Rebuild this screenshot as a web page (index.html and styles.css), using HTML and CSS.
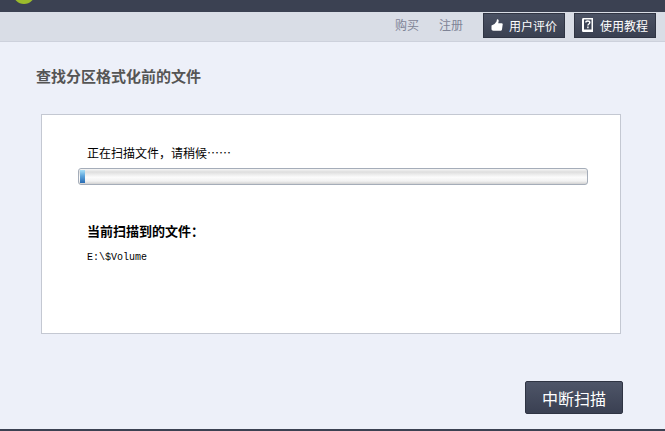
FILE: index.html
```html
<!DOCTYPE html>
<html lang="zh-CN">
<head>
  <meta charset="UTF-8" />
  <meta name="viewport" content="width=device-width, initial-scale=1.0" />
  <title>查找分区格式化前的文件</title>
  <link rel="stylesheet" href="styles.css">
</head>
<body>
  <div class="app">
    <div class="topbar">
      <div class="logo"></div>
    </div>

    <!-- Links row -->
    <div class="navbar">
      <a class="nav-link buy">购买</a>
      <a class="nav-link signup">注册</a>
      <a class="nav-btn">
        <svg class="nav-icon" viewBox="0 0 12 12" xmlns="http://www.w3.org/2000/svg">
          <path d="M0.5 6.5 L3.5 5 L5.5 2.5 L6 0.3 C7.4 0 8 1.2 7.6 2.6 L7.2 4.2 H10.6 C11.7 4.2 12 5.2 11.6 6 L11 10.4 C10.8 11.3 10.2 11.7 9.4 11.7 H2.5 C1.2 11.7 0.5 11 0.5 10 Z" fill="#fff"/>
        </svg>
        用户评价
      </a>
      <a class="nav-btn">
        <svg class="nav-icon book" viewBox="0 0 11 14" xmlns="http://www.w3.org/2000/svg">
          <path d="M1.5 0 H11 V14 H1.5 C0.5 14 0 13.5 0 12.5 V1.5 C0 0.5 0.5 0 1.5 0 Z" fill="#fff"/>
          <path d="M2 1.5 H9.5 V11.5 H2 Z" fill="#3d4456"/>
          <path d="M3.8 4.6 C3.8 2.4 7.8 2.4 7.8 4.6 C7.8 6 5.9 6 5.9 7.6" fill="none" stroke="#fff" stroke-width="1.4"/>
          <path d="M5.2 8.6 H6.6 V10.2 H5.2 Z" fill="#fff"/>
        </svg>
        使用教程
      </a>
    </div>

    <div class="content">
      <h1 class="page-title">查找分区格式化前的文件</h1>

      <div class="card">
        <div class="scan-label">正在扫描文件，请稍候……</div>
        <div class="progress">
          <div class="progress-fill" style="width:1%"></div>
        </div>
        <div class="current-label">当前扫描到的文件：</div>
        <div class="current-file">E:\$Volume</div>
      </div>

      <div class="actions">
        <button type="button" class="stop-btn">中断扫描</button>
      </div>
    </div>
  </div>
</body>
</html>
```

FILE: styles.css
```css
:root {
  --dark: #3b4152;
  --bar: #d9dde6;
  --bg: #edf0f9;
  --cjk: "Noto Sans CJK SC", "Liberation Sans", sans-serif;
}
*, *::before, *::after { box-sizing: border-box; }
html, body { margin: 0; padding: 0; height: 100%; overflow: hidden; }
body { font-family: var(--cjk); font-size: 12px; background: var(--bg); }

.app { height: 431px; display: flex; flex-direction: column; position: relative; border-bottom: 2px solid var(--dark); }

.topbar { height: 12px; background: var(--dark); flex: none; }
.logo {
  position: absolute; left: 13px; top: -7px;
  width: 22px; height: 11px;
  border-radius: 0 0 11px 11px;
  background: #9cbb2c;
}

.navbar {
  height: 30px; flex: none;
  background: var(--bar);
  border-bottom: 1px solid #cdd1dc;
  display: flex; align-items: center;
  padding: 0 9px 3px 0;
  justify-content: flex-end;
}
.nav-link { color: #7f8496; font-size: 12px; line-height: 1; }
.buy { margin-right: 20px; }
.signup { margin-right: 20px; }
.nav-btn {
  width: 82px; height: 25px;
  display: flex; align-items: center; justify-content: center; gap: 6px;
  background: linear-gradient(#4a5163, #3a4051);
  border: 1px solid #2f3443;
  color: #fff; font-size: 12px;
}
.nav-btn + .nav-btn { margin-left: 9px; gap: 7px; }
.nav-icon { width: 12px; height: 12px; flex: none; }
.nav-icon.book { width: 11px; height: 14px; }

.content { flex: 1; display: flex; flex-direction: column; padding: 24px 42px 0 36px; }
.page-title { margin: 0; font-size: 15px; line-height: 20px; font-weight: 700; color: #555; }

.card {
  margin: 28px 2px 0 5px;
  height: 220px;
  background: #fff;
  border: 1px solid #c4c8d2;
  padding: 30px 32px 0 36px;
  color: #000;
}
.scan-label { line-height: 16px; margin-left: 9px; }
.progress {
  height: 17px;
  margin-top: 7px;
  border: 1px solid #a5adb9;
  border-radius: 3px;
  padding: 1px;
  background: linear-gradient(#f6f6f6, #dedede 20%, #fcfcfc 55%, #f2f2f2 80%, #d2d2d2);
}
.progress-fill {
  height: 100%;
  background: linear-gradient(#a8e0f8, #5fa6dc 45%, #2a6cb4);
}
.current-label { margin: 37px 0 0 9px; font-size: 13px; font-weight: 700; line-height: 18px; }
.current-file { margin: 11px 0 0 9px; font-family: "Liberation Mono", monospace; font-size: 10px; line-height: 14px; }

.actions { display: flex; justify-content: flex-end; margin-top: 47px; }
.stop-btn {
  width: 98px; height: 33px;
  padding: 0;
  background: linear-gradient(#4e5568, #3a4052);
  border: 1px solid #2f3443;
  border-radius: 2px;
  color: #fff;
  font-family: var(--cjk);
  font-size: 16px;
}
```
